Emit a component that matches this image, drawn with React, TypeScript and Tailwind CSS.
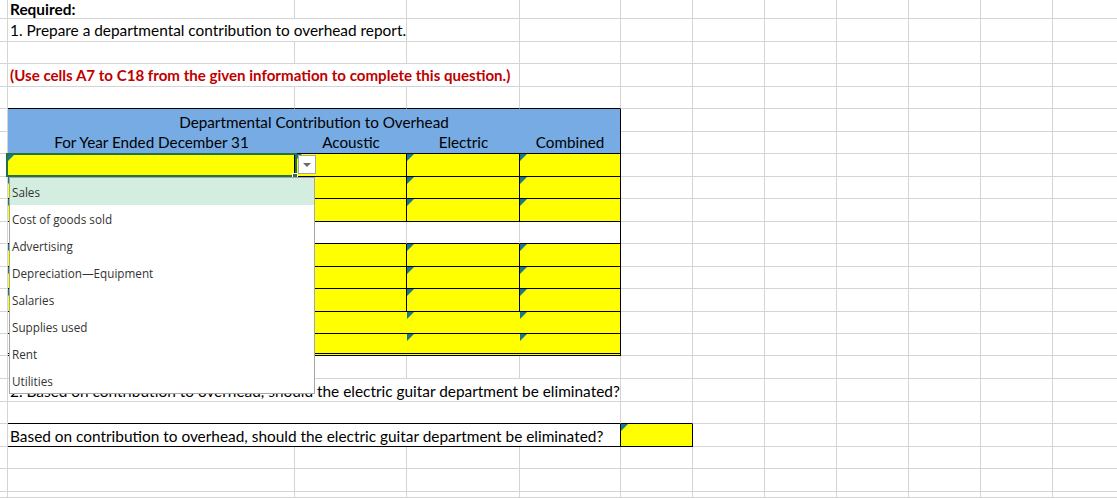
import React from "react";

const G = "shrink-0 border-r border-b border-[#d4d4d4]";

// small teal corner marker excel puts on input cells
const Mark = () => (
    <svg className="absolute left-0 top-0" width="7" height="7" viewBox="0 0 7 7">
        <polygon points="0,0 7,0 0,7" fill="#17798a" />
    </svg>
);

const Right = ({ first }: { first?: React.ReactNode }) => (
    <>
        {first ?? <div className={`w-[72px] ${G}`} />}
        {[0, 1, 2, 3, 4, 5].map((i) => (
            <div key={i} className={`w-[72px] ${G}`} />
        ))}
    </>
);

const Col0 = () => <div className={`w-[8px] ${G}`} />;

const PlainRow = ({ h, blackBottom }: { h: string; blackBottom?: boolean }) => (
    <div className={`flex ${h}`}>
        <Col0 />
        {blackBottom ? (
            <>
                <div className="w-[287px] shrink-0 border-r border-[#d4d4d4] border-b border-b-black" />
                <div className="w-[112px] shrink-0 border-r border-[#d4d4d4] border-b border-b-black" />
                <div className="w-[113px] shrink-0 border-r border-[#d4d4d4] border-b border-b-black" />
                <div className="w-[101px] shrink-0 border-r border-[#d4d4d4] border-b border-b-black" />
            </>
        ) : (
            <>
                <div className={`w-[287px] ${G}`} />
                <div className={`w-[112px] ${G}`} />
                <div className={`w-[113px] ${G}`} />
                <div className={`w-[101px] ${G}`} />
            </>
        )}
        <Right />
    </div>
);

const YellowRow = ({ h }: { h: string }) => (
    <div className={`flex ${h}`}>
        <Col0 />
        <div className="relative w-[287px] shrink-0 bg-[#ffff00] border-r border-b border-black"><Mark /></div>
        <div className="relative w-[112px] shrink-0 bg-[#ffff00] border-r border-b border-black"><Mark /></div>
        <div className="relative w-[113px] shrink-0 bg-[#ffff00] border-r border-b border-black"><Mark /></div>
        <div className="relative w-[101px] shrink-0 bg-[#ffff00] border-r border-b border-black"><Mark /></div>
        <Right />
    </div>
);

const OpenRow = ({ h, last }: { h: string; last?: boolean }) => (
    <div className={`flex ${h}`}>
        <Col0 />
        <div className={`w-[287px] shrink-0 border-r border-black ${last ? "border-b-[3px] border-double" : "border-b"}`} />
        <div className={`relative w-[112px] shrink-0 bg-[#ffff00] border-black ${last ? "border-b-[3px] border-double" : "border-b"}`} />
        <div className={`relative w-[113px] shrink-0 bg-[#ffff00] border-black ${last ? "border-b-[3px] border-double" : "border-b"}`}><Mark /></div>
        <div className={`relative w-[101px] shrink-0 bg-[#ffff00] border-r border-black ${last ? "border-b-[3px] border-double" : "border-b"}`}><Mark /></div>
        <Right />
    </div>
);

const items = [
    "Sales",
    "Cost of goods sold",
    "Advertising",
    "Depreciation\u2014Equipment",
    "Salaries",
    "Supplies used",
    "Rent",
    "Utilities",
];

export default function App() {
    return (
        <div className="relative w-[1117px] h-[498px] overflow-hidden bg-white text-black font-['Lato',sans-serif] text-[15.4px] leading-none">
            {/* rows 1-5 */}
            <div className="flex h-[19px]">
                <Col0 />
                <div className={`w-[287px] ${G} flex items-center pl-[2px] pt-[1px] font-bold`}>Required:</div>
                <div className={`w-[112px] ${G}`} />
                <div className={`w-[113px] ${G}`} />
                <div className={`w-[101px] ${G}`} />
                <Right />
            </div>
            <div className="flex h-[23px]">
                <Col0 />
                <div className={`w-[399px] ${G} flex items-center pl-[2px] pt-[2px] whitespace-nowrap`}>
                    1. Prepare a departmental contribution to overhead report.
                </div>
                <div className={`w-[113px] ${G}`} />
                <div className={`w-[101px] ${G}`} />
                <Right />
            </div>
            <PlainRow h="h-[22px]" />
            <div className="flex h-[23px]">
                <Col0 />
                <div className={`w-[512px] ${G} flex items-center pl-[2px] pt-[2px] whitespace-nowrap font-bold text-[15.1px] text-[#c00000]`}>
                    (Use cells A7 to C18 from the given information to complete this question.)
                </div>
                <div className={`w-[101px] ${G}`} />
                <Right />
            </div>
            <PlainRow h="h-[22px]" blackBottom />

            {/* report header */}
            <div className="flex h-[23px]">
                <Col0 />
                <div className="w-[613px] shrink-0 bg-[#77abe4] border-r border-black flex items-end justify-center pb-[2px] text-[15.25px]">
                    Departmental Contribution to Overhead
                </div>
                <Right />
            </div>
            <div className="flex h-[22px] text-[15.25px]">
                <Col0 />
                <div className="w-[287px] shrink-0 bg-[#77abe4] border-b border-black flex items-center justify-center">For Year Ended December 31</div>
                <div className="w-[112px] shrink-0 bg-[#77abe4] border-b border-black flex items-center justify-center">Acoustic</div>
                <div className="w-[113px] shrink-0 bg-[#77abe4] border-b border-black flex items-center justify-center">Electric</div>
                <div className="w-[101px] shrink-0 bg-[#77abe4] border-r border-b border-black flex items-center justify-center">Combined</div>
                <Right />
            </div>

            {/* body */}
            <YellowRow h="h-[23px]" />
            <YellowRow h="h-[22px]" />
            <YellowRow h="h-[23px]" />
            <div className="flex h-[22px]">
                <Col0 />
                <div className="w-[287px] shrink-0 border-r border-b border-black" />
                <div className="w-[112px] shrink-0 border-r border-[#d4d4d4] border-b border-b-black" />
                <div className="w-[113px] shrink-0 border-r border-[#d4d4d4] border-b border-b-black" />
                <div className="w-[101px] shrink-0 border-r border-b border-black" />
                <Right />
            </div>
            <YellowRow h="h-[23px]" />
            <YellowRow h="h-[22px]" />
            <YellowRow h="h-[23px]" />
            <OpenRow h="h-[22px]" />
            <OpenRow h="h-[22px]" last />

            {/* question 2 */}
            <PlainRow h="h-[23px]" />
            <div className="flex h-[23px]">
                <Col0 />
                <div className={`w-[613px] ${G} flex items-center pl-[2px] pt-[3px] whitespace-nowrap`}>
                    2. Based on contribution to overhead, should the electric guitar department be eliminated?
                </div>
                <Right />
            </div>
            <div className="flex h-[22px]">
                <Col0 />
                <div className="w-[613px] shrink-0 border-r border-[#d4d4d4] border-b border-b-black" />
                <Right first={<div className="w-[72px] shrink-0 border-r border-[#d4d4d4] border-b border-b-black" />} />
            </div>
            <div className="flex h-[23px]">
                <Col0 />
                <div className="w-[613px] shrink-0 border-r border-b border-black flex items-center pl-[2px] pt-[3px] whitespace-nowrap">
                    Based on contribution to overhead, should the electric guitar department be eliminated?
                </div>
                <Right first={<div className="relative w-[72px] shrink-0 bg-[#ffff00] border-r border-b border-black"><Mark /></div>} />
            </div>
            <PlainRow h="h-[22px]" />
            <PlainRow h="h-[23px]" />
            <PlainRow h="h-[6px]" />

            {/* active cell A7 */}
            <div className="absolute left-[6px] top-[153px] w-[291px] h-[24px] border-2 border-[#217346]" />
            <div className="absolute left-[292px] top-[173px] w-[6px] h-[6px] bg-[#217346] border border-white" />

            {/* validation dropdown button */}
            <div className="absolute left-[298px] top-[155px] w-[18px] h-[19px] bg-white border border-[#a6a6a6] flex items-center justify-center">
                <svg width="8" height="4" viewBox="0 0 8 4">
                    <polygon points="0,0 8,0 4,4" fill="#6b6b6b" />
                </svg>
            </div>

            {/* validation list */}
            <div className="absolute left-[9px] top-[177px] w-[306px] h-[217px] bg-white border border-[#a6a6a6] font-['Open_Sans',sans-serif] text-[11.7px] text-[#333333]">
                {items.map((it, i) => (
                    <div key={it} className={`h-[27px] flex items-center pl-[2px] pt-[2px] ${i === 0 ? "bg-[#d3ede0]" : ""}`}>
                        {it}
                    </div>
                ))}
            </div>
        </div>
    );
}
